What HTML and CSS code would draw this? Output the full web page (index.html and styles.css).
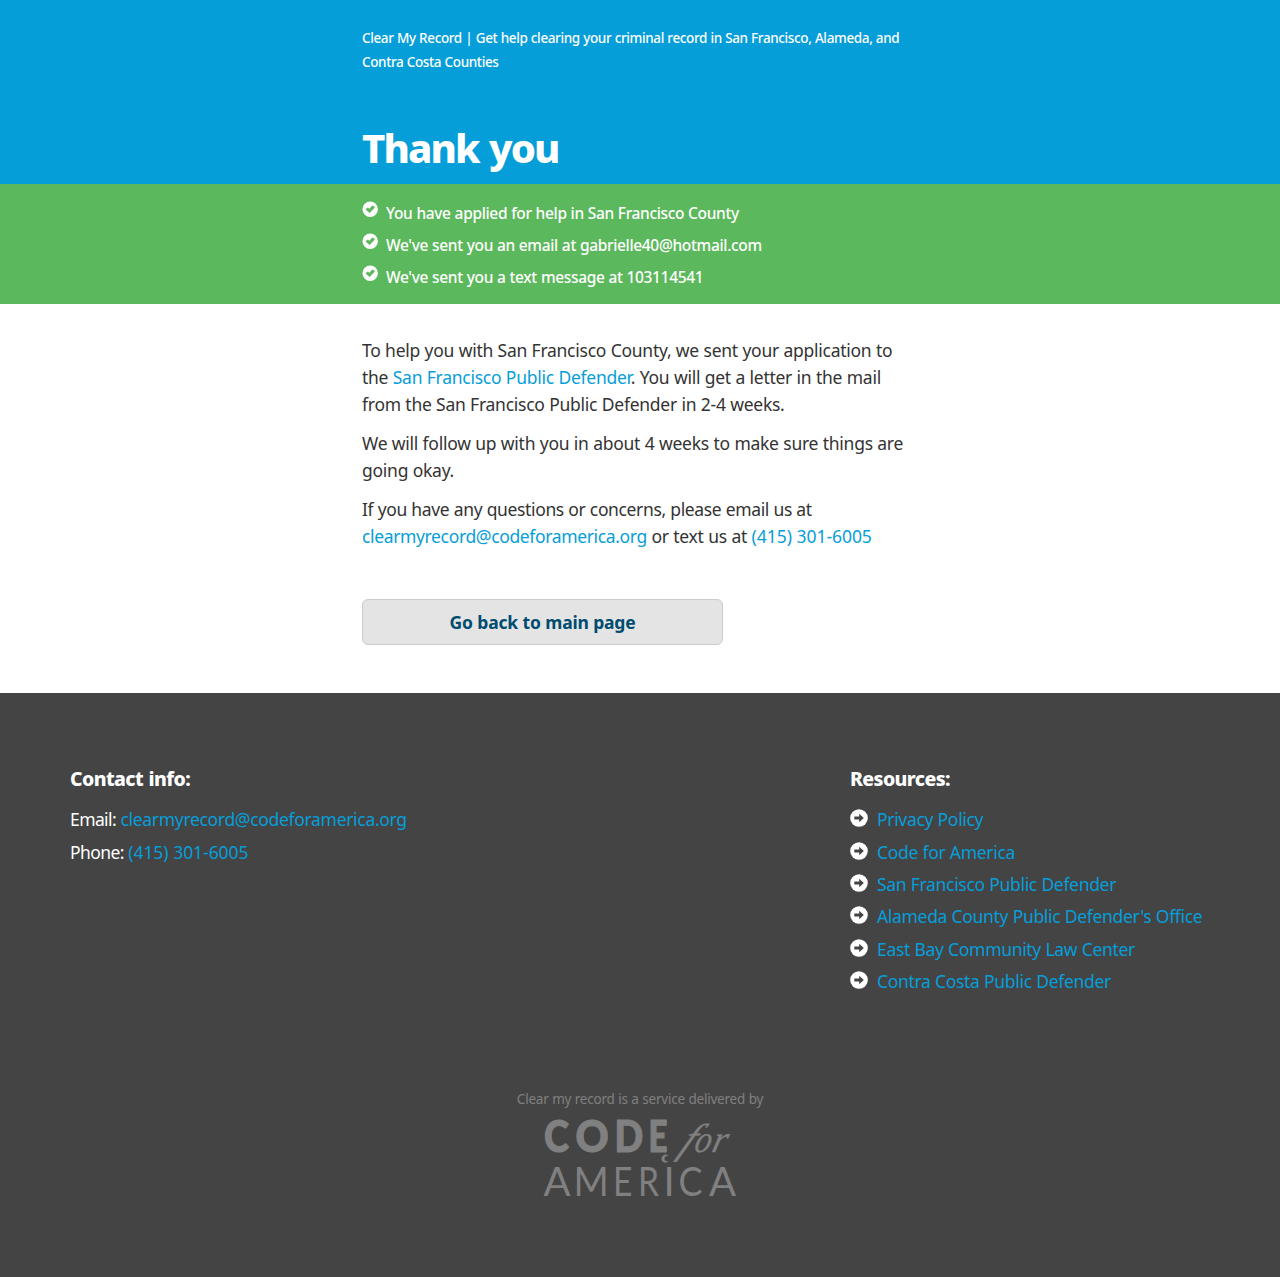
FILE: index.html
```html
<!DOCTYPE html>
<html lang="en">
<head>
<meta charset="utf-8">
<title>Thank you | Clear My Record</title>
<link rel="stylesheet" href="styles.css">
</head>
<body>
<svg class="sprite" aria-hidden="true">
  <symbol id="check" viewBox="0 0 16 16"><circle cx="8.2" cy="8.2" r="7.7" fill="#fff"/><path d="M3.6 8.4 5.7 6.4 7.4 7.700 10.600 4.200 12.900 6.400 7.600 12Z" fill="#5cb85c"/></symbol>
  <symbol id="arrow" viewBox="0 0 18 18"><circle cx="9" cy="9" r="8.8" fill="#fff"/><path d="M4.3 7.6h4.9V4.7L13.8 9l-4.6 4.3v-2.9H4.3Z" fill="#444"/></symbol>
</svg>
<header class="header">
  <div class="column">
    <p class="tagline">Clear My Record | Get help clearing your criminal record in San Francisco, Alameda, and<br>Contra Costa Counties</p>
    <h1 class="title">Thank you</h1>
  </div>
</header>
<section class="flash">
  <ul class="column messages">
    <li class="message"><svg class="check"><use href="#check"/></svg><span>You have applied for help in San Francisco County</span></li>
    <li class="message"><svg class="check"><use href="#check"/></svg><span>We've sent you an email at gabrielle40@hotmail.com</span></li>
    <li class="message"><svg class="check"><use href="#check"/></svg><span>We've sent you a text message at 103114541</span></li>
  </ul>
</section>
<main class="column content">
  <p class="para">To help you with San Francisco County, we sent your application to<br>the <a href="#">San Francisco Public Defender</a>. You will get a letter in the mail<br>from the San Francisco Public Defender in 2-4 weeks.</p>
  <p class="para">We will follow up with you in about 4 weeks to make sure things are<br>going okay.</p>
  <p class="para"><span class="snug">If you have any questions or concerns, please email us at</span><br><a class="snug" href="#">clearmyrecord@codeforamerica.org</a> or text us at <a class="phone" href="#">(415) 301-6005</a></p>
  <a class="button" href="#">Go back to main page</a>
</main>
<footer class="footer">
  <div class="footer-columns">
    <section class="contact">
      <h2 class="heading">Contact info:</h2>
      <p class="entry"><span class="label">Email:</span> <a href="#">clearmyrecord@codeforamerica.org</a></p>
      <p class="entry"><span class="label">Phone:</span> <a class="phone" href="#">(415) 301-6005</a></p>
    </section>
    <section class="resources">
      <h2 class="heading">Resources:</h2>
      <ul class="links">
        <li class="entry"><svg class="arrow"><use href="#arrow"/></svg><a href="#">Privacy Policy</a></li>
        <li class="entry"><svg class="arrow"><use href="#arrow"/></svg><a href="#">Code for America</a></li>
        <li class="entry"><svg class="arrow"><use href="#arrow"/></svg><a href="#">San Francisco Public Defender</a></li>
        <li class="entry"><svg class="arrow"><use href="#arrow"/></svg><a href="#">Alameda County Public Defender's Office</a></li>
        <li class="entry"><svg class="arrow"><use href="#arrow"/></svg><a href="#">East Bay Community Law Center</a></li>
        <li class="entry"><svg class="arrow"><use href="#arrow"/></svg><a href="#">Contra Costa Public Defender</a></li>
      </ul>
    </section>
  </div>
  <div class="credit">
    <p class="credit-text">Clear my record is a service delivered by</p>
    <svg class="logo" viewBox="0 0 192 80" role="img" aria-label="Code for America">
      <g class="logo-code">
        <text transform="translate(0 33.3) scale(.82 .97)">C</text>
        <text transform="translate(31.5 33.3) scale(.89 .97)">O</text>
        <text transform="translate(70.500 33.3) scale(.82 .97)">D</text>
        <text transform="translate(104.500 33.3) scale(.72 .97)">E</text>
      </g>
      <g class="logo-for">
        <text class="logo-f" transform="translate(133.500 34) skewX(-28)">f</text>
        <text transform="translate(149 33) skewX(-14) scale(.86 1)">o</text>
        <text transform="translate(166.500 33) skewX(-14)">r</text>
        <path d="M124.500 36.500c-4-2.200-7.300.6-6.800 4 .4 3 4.300 4 6.500 2-2.600.2-4-.9-3.800-2.900.2-1.900 2-3.100 4.100-3.100Z"/>
      </g>
      <g class="logo-america">
        <text transform="translate(-.5 77)">A</text>
        <text transform="translate(29.500 77) scale(.95 1)">M</text>
        <text transform="translate(69 77) scale(.84 1)">E</text>
        <text transform="translate(94 77) scale(.84 1)">R</text>
        <text transform="translate(119.500 77)">I</text>
        <text transform="translate(134.500 77) scale(.9 1)">C</text>
        <text transform="translate(165 77)">A</text>
      </g>
    </svg>
  </div>
</footer>
</body>
</html>
```
FILE: styles.css
```css
* { box-sizing: border-box; }
body { margin: 0; font: 17.5px/27px "Noto Sans", sans-serif; letter-spacing: -.26px; word-spacing: .25px; color: #333; background: #fff; }
h1, h2, p, ul { margin: 0; padding: 0; }
ul { list-style: none; }
a { color: #069ed9; text-decoration: none; }
.sprite { position: absolute; width: 0; height: 0; }
.column { width: 556px; margin: 0 auto; }
.header { height: 184px; padding-top: 26px; background: #069ed9; color: #fff; }
.tagline { font-size: 13.5px; font-weight: 500; line-height: 24px; letter-spacing: -.37px; }
.title { margin-top: 52px; font-size: 40px; font-weight: 800; line-height: 44px; letter-spacing: -1.9px; word-spacing: 2px; }
.flash { height: 120px; padding-top: 13px; background: #5cb85c; color: #fff; }
.message { display: flex; gap: 8px; height: 32px; font-size: 15.5px; font-weight: 500; line-height: 33px; letter-spacing: -.34px; }
.check { width: 16px; height: 16px; margin-top: 4px; }
.content { height: 389px; padding-top: 33px; white-space: nowrap; }
.para { margin-bottom: 12px; }
.snug { letter-spacing: -.36px; }
.button { display: block; width: 361px; height: 46px; margin-top: 49px; border: 1px solid #ccc; border-radius: 6px; background: #e4e4e4; color: #004c70; font-weight: 700; line-height: 45px; letter-spacing: -.2px; text-align: center; }
.footer { height: 584px; padding-top: 72px; background: #444; color: #fff; }
.footer-columns { display: flex; width: 1140px; height: 320px; margin: 0 auto; }
.contact { width: 780px; }
.heading { margin-bottom: 14.3px; font-size: 19.5px; font-weight: 800; line-height: 27px; letter-spacing: -.6px; word-spacing: 1px; }
.entry { display: flex; gap: 9px; height: 32.4px; letter-spacing: -.32px; white-space: pre; }
.contact .entry { display: block; }
.label { letter-spacing: -.6px; }
.phone { letter-spacing: -.06px; }
.arrow { width: 18px; height: 18px; margin-top: 3px; }
.credit { text-align: center; color: #808080; }
.credit-text { font-size: 13.5px; line-height: 28px; letter-spacing: -.21px; }
.logo { display: block; width: 192px; height: 80px; margin: 6px auto 0; overflow: visible; fill: #808080; letter-spacing: 0; }
.logo-code { font: 900 46px/1 Lato, sans-serif; stroke: #808080; stroke-width: 1.2px; }
.logo-for { font: italic 38px/1 "Liberation Serif", serif; stroke: #808080; stroke-width: .3px; }
.logo-f { font-size: 42px; }
.logo-america { font: 400 40px/1 Lato, sans-serif; }
```
